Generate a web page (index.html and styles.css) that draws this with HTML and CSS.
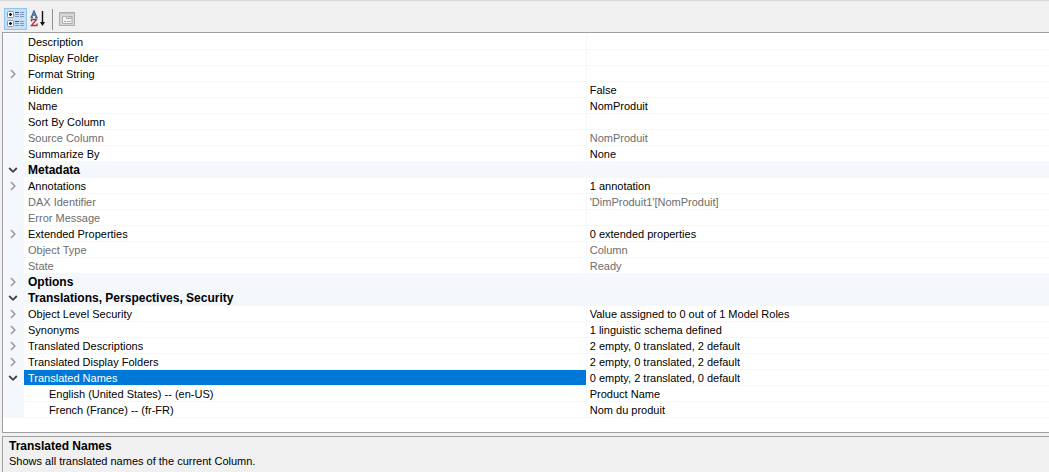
FILE: index.html
```html
<!DOCTYPE html>
<html lang="en">
<head>
<meta charset="utf-8">
<title>Properties</title>
<link rel="stylesheet" href="styles.css">
</head>
<body>
<svg class="defs" aria-hidden="true">
  <symbol id="closed" viewBox="0 0 10 10"><path d="M3 1.2 L6.8 5 L3 8.8" fill="none" stroke="#a0a0a0" stroke-width="1.7"/></symbol>
  <symbol id="open" viewBox="0 0 10 10"><path d="M1.2 3 L5 6.8 L8.8 3" fill="none" stroke="#404040" stroke-width="1.8"/></symbol>
</svg>
<div class="panel">
  <div class="toolbar" role="toolbar" aria-label="Property view">
    <button class="tool tool-active" aria-label="Categorized" aria-pressed="true">
      <svg width="19" height="18" viewBox="0 0 19 18">
        <g fill="#fff" stroke="#8496ad"><rect x="1.5" y="1.5" width="6" height="6" rx="1"/><rect x="1.5" y="10.5" width="6" height="6" rx="1"/></g>
        <path d="M3 4.5h3M4.500 3v3M3 13.500h3M4.500 12v3" stroke="#0a1526" stroke-width="1.400"/>
        <path d="M9 2.500h4M9 11.500h4" stroke="#45536a"/>
        <path d="M14 2.500h4M9 4.500h4M14 4.500h4M9 6.500h4M14 6.500h4M14 11.500h4M9 13.500h4M14 13.500h4M9 15.500h4M14 15.500h4" stroke="#7f98bb"/>
      </svg>
    </button>
    <button class="tool" aria-label="Alphabetical">
      <svg width="19" height="18" viewBox="0 0 19 18" fill="none">
        <path d="M2.500 7 L5 1 L7.500 7 M3.500 5h3M1.500 7.500h2.500M6 7.500h2.500" stroke="#3c62a0" stroke-width="1.400"/>
        <path d="M2.500 11.500v-2h5L2.500 15.500h5.500v-2" stroke="#a33a45" stroke-width="1.400"/>
        <path d="M13.500 1v13" stroke="#111" stroke-width="1.400"/><path d="M11 12h5l-2.500 4z" fill="#111"/>
      </svg>
    </button>
    <span class="separator"></span>
    <button class="tool" aria-label="Property Pages" disabled>
      <svg width="19" height="18" viewBox="0 0 19 18" fill="none">
        <rect x="1.500" y="2.500" width="15" height="13" fill="#d6d6d6" stroke="#adadad"/>
        <path d="M2 3.500h14" stroke="#c2c2c2"/>
        <path d="M4.500 13.500v-7h4v2h5.500v5z" fill="#f2f2f2" stroke="#b0b0b0"/>
        <path d="M9.500 6.500h4.500v2M6 11.500h2M9 11.500h3.500" stroke="#aaa"/>
      </svg>
    </button>
  </div>
  <main class="grid">
    <table class="properties">
      <colgroup><col class="col-gutter"><col class="col-name"><col></colgroup>
      <tbody>
        <tr><td></td><th scope="row">Description</th><td></td></tr>
        <tr><td></td><th scope="row">Display Folder</th><td></td></tr>
        <tr><td><button class="expander" aria-label="Expand Format String"><svg><use href="#closed"/></svg></button></td><th scope="row">Format String</th><td></td></tr>
        <tr><td></td><th scope="row">Hidden</th><td>False</td></tr>
        <tr><td></td><th scope="row">Name</th><td>NomProduit</td></tr>
        <tr><td></td><th scope="row">Sort By Column</th><td></td></tr>
        <tr class="readonly"><td></td><th scope="row">Source Column</th><td>NomProduit</td></tr>
        <tr><td></td><th scope="row">Summarize By</th><td>None</td></tr>
        <tr class="category"><td><button class="expander" aria-label="Collapse Metadata"><svg><use href="#open"/></svg></button></td><th colspan="2">Metadata</th></tr>
        <tr><td><button class="expander" aria-label="Expand Annotations"><svg><use href="#closed"/></svg></button></td><th scope="row">Annotations</th><td>1 annotation</td></tr>
        <tr class="readonly"><td></td><th scope="row">DAX Identifier</th><td>'DimProduit1'[NomProduit]</td></tr>
        <tr class="readonly"><td></td><th scope="row">Error Message</th><td></td></tr>
        <tr><td><button class="expander" aria-label="Expand Extended Properties"><svg><use href="#closed"/></svg></button></td><th scope="row">Extended Properties</th><td>0 extended properties</td></tr>
        <tr class="readonly"><td></td><th scope="row">Object Type</th><td>Column</td></tr>
        <tr class="readonly"><td></td><th scope="row">State</th><td>Ready</td></tr>
        <tr class="category"><td><button class="expander" aria-label="Expand Options"><svg><use href="#closed"/></svg></button></td><th colspan="2">Options</th></tr>
        <tr class="category"><td><button class="expander" aria-label="Collapse Translations, Perspectives, Security"><svg><use href="#open"/></svg></button></td><th colspan="2">Translations, Perspectives, Security</th></tr>
        <tr><td><button class="expander" aria-label="Expand Object Level Security"><svg><use href="#closed"/></svg></button></td><th scope="row">Object Level Security</th><td>Value assigned to 0 out of 1 Model Roles</td></tr>
        <tr><td><button class="expander" aria-label="Expand Synonyms"><svg><use href="#closed"/></svg></button></td><th scope="row">Synonyms</th><td>1 linguistic schema defined</td></tr>
        <tr><td><button class="expander" aria-label="Expand Translated Descriptions"><svg><use href="#closed"/></svg></button></td><th scope="row">Translated Descriptions</th><td>2 empty, 0 translated, 2 default</td></tr>
        <tr><td><button class="expander" aria-label="Expand Translated Display Folders"><svg><use href="#closed"/></svg></button></td><th scope="row">Translated Display Folders</th><td>2 empty, 0 translated, 2 default</td></tr>
        <tr class="selected"><td><button class="expander" aria-label="Collapse Translated Names"><svg><use href="#open"/></svg></button></td><th scope="row">Translated Names</th><td>0 empty, 2 translated, 0 default</td></tr>
        <tr class="child"><td></td><th scope="row">English (United States) -- (en-US)</th><td>Product Name</td></tr>
        <tr class="child"><td></td><th scope="row">French (France) -- (fr-FR)</th><td>Nom du produit</td></tr>
      </tbody>
    </table>
  </main>
  <section class="help">
    <h2 class="help-title">Translated Names</h2>
    <p class="help-text">Shows all translated names of the current Column.</p>
  </section>
</div>
</body>
</html>
```
FILE: styles.css
```css
* { box-sizing: border-box; }
body {
  margin: 0;
  background: #f0f0f0;
  color: #000;
  font: 11px/13px "Liberation Sans", Arial, sans-serif;
}
.defs { display: none; }
.panel {
  display: flex;
  flex-direction: column;
  min-height: 100vh;
  padding-left: 2px;
  border-top: 1px solid #d9d9d9;
}
.toolbar {
  display: flex;
  align-items: flex-start;
  padding: 7px 2px 2px;
}
.tool {
  display: flex;
  align-items: center;
  justify-content: center;
  width: 23px;
  height: 22px;
  padding: 0;
  border: 1px solid transparent;
  background: none;
}
.tool-active { border-color: #92c4ee; background: #c4dff6; }
.separator {
  width: 1px;
  height: 21px;
  margin: 1px 3px 0 2px;
  background: #909090;
}
.grid {
  flex: 1;
  padding: 1px 0 14px;
  border: solid #a0a0a0;
  border-width: 1px 0 1px 1px;
  background: #fff;
}
.properties {
  width: 100%;
  border-collapse: separate;
  border-spacing: 0;
  table-layout: fixed;
}
.col-gutter { width: 21px; }
.col-name { width: 53.8%; }
.properties td,
.properties th {
  height: 16px;
  padding: 2px 3px 0;
  border-bottom: 1px solid #f4f7fc;
  font-weight: normal;
  text-align: left;
  white-space: nowrap;
}
.properties th { padding-left: 4px; border-right: 1px solid #f4f7fc; }
.properties td:first-child { padding: 0; background: #f4f7fc; }
.properties .category th {
  padding-top: 1px;
  background: #f4f7fc;
  font-size: 12px;
  font-weight: bold;
  line-height: 14px;
}
.properties .readonly { color: #6d6d6d; }
.properties .selected th { background: #0078d7; background-clip: padding-box; color: #fff; }
.properties .child th { padding-left: 25px; }
.expander {
  display: block;
  width: 10px;
  height: 10px;
  margin-left: 5px;
  padding: 0;
  border: 0;
  background: none;
}
.expander svg { display: block; width: 10px; height: 10px; }
.help {
  margin-top: 3px;
  padding: 2px 6px 3px;
  border: solid #a0a0a0;
  border-width: 1px 0 0 1px;
}
.help-title { margin: 0; font-size: 12px; line-height: 15px; }
.help-text { margin: 0; line-height: 15px; }
```
